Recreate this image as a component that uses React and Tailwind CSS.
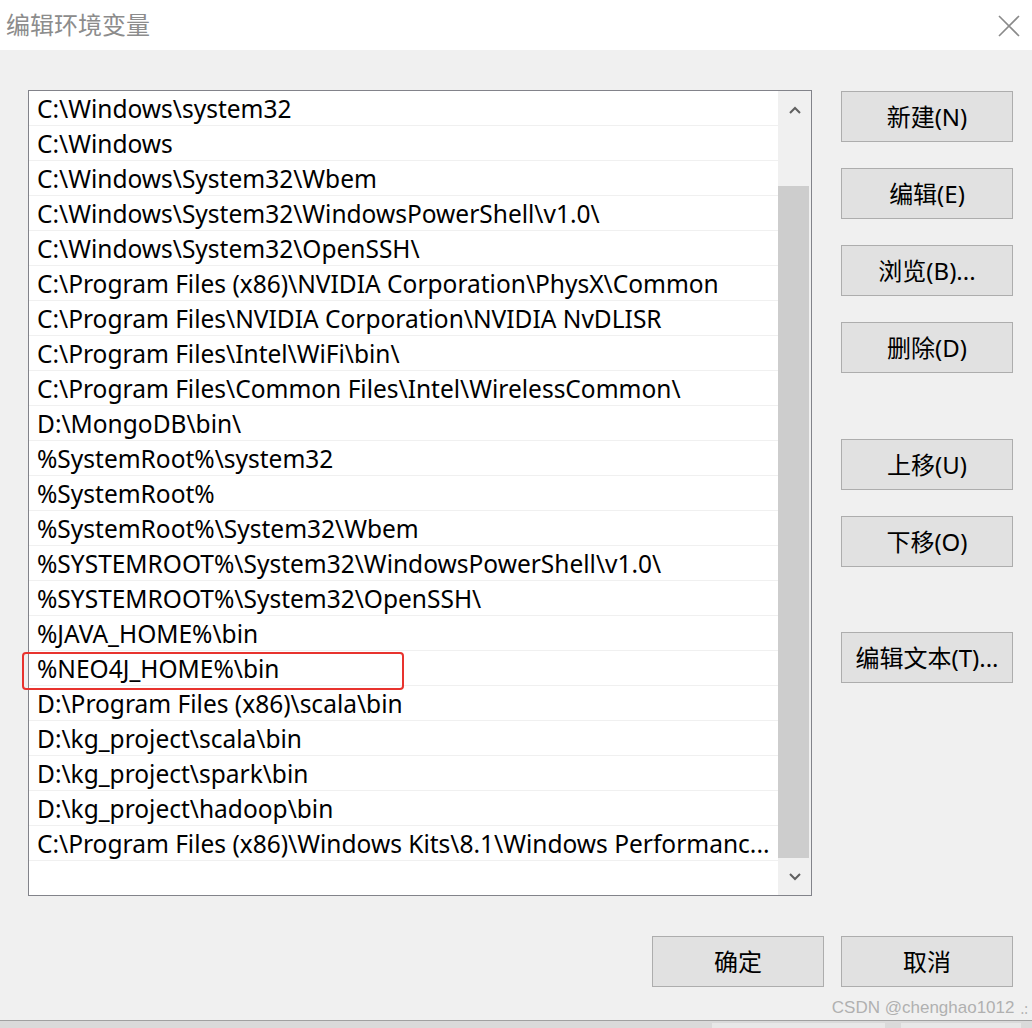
import React from "react";

const paths = [
  "C:\\Windows\\system32",
  "C:\\Windows",
  "C:\\Windows\\System32\\Wbem",
  "C:\\Windows\\System32\\WindowsPowerShell\\v1.0\\",
  "C:\\Windows\\System32\\OpenSSH\\",
  "C:\\Program Files (x86)\\NVIDIA Corporation\\PhysX\\Common",
  "C:\\Program Files\\NVIDIA Corporation\\NVIDIA NvDLISR",
  "C:\\Program Files\\Intel\\WiFi\\bin\\",
  "C:\\Program Files\\Common Files\\Intel\\WirelessCommon\\",
  "D:\\MongoDB\\bin\\",
  "%SystemRoot%\\system32",
  "%SystemRoot%",
  "%SystemRoot%\\System32\\Wbem",
  "%SYSTEMROOT%\\System32\\WindowsPowerShell\\v1.0\\",
  "%SYSTEMROOT%\\System32\\OpenSSH\\",
  "%JAVA_HOME%\\bin",
  "%NEO4J_HOME%\\bin",
  "D:\\Program Files (x86)\\scala\\bin",
  "D:\\kg_project\\scala\\bin",
  "D:\\kg_project\\spark\\bin",
  "D:\\kg_project\\hadoop\\bin",
  "C:\\Program Files (x86)\\Windows Kits\\8.1\\Windows Performanc...",
];

const font = { fontFamily: '"Noto Sans", "Noto Sans CJK SC", sans-serif' };

const Btn = ({ children }) => (
  <button className="w-[172px] h-[51px] border border-[#adadad] bg-[#e1e1e1] text-[24px] text-black flex items-center justify-center">
    {children}
  </button>
);

export default function App() {
  return (
    <div className="w-[1032px] h-[1028px] flex flex-col bg-[#f0f0f0] overflow-hidden" style={font}>
      {/* title bar */}
      <div className="h-[50px] bg-white flex items-center justify-between pl-[6px] pr-[12px] shrink-0">
        <span className="text-[24px] text-[#8c8c8c]">编辑环境变量</span>
        <svg width="22" height="22" viewBox="0 0 22 22" className="mt-[1px]">
          <path d="M1 1 L21 21 M21 1 L1 21" stroke="#8a8a8a" strokeWidth="1.6" />
        </svg>
      </div>

      <div className="flex-1 flex flex-col">
        <div className="flex pt-[40px]">
          {/* list box */}
          <div className="relative ml-[28px] w-[784px] h-[806px] border border-[#82838a] bg-white flex">
            <div className="flex-1 flex flex-col">
              {paths.map((p, i) => (
                <div
                  key={i}
                  className="h-[35px] shrink-0 border-b border-[#f0f0f0] flex items-center pl-[8px] pt-[2px] text-[24.5px] leading-[30px] text-black whitespace-nowrap"
                >
                  {p}
                </div>
              ))}
            </div>
            {/* highlight around NEO4J row */}
            <div className="absolute left-[-7px] top-[561px] w-[382px] h-[38px] border-2 border-[#e8332e] rounded-[4px]" />
            {/* scrollbar */}
            <div className="w-[33px] bg-[#f0f0f0] flex flex-col items-center">
              <div className="h-[38px] w-full flex items-center justify-center">
                <svg width="12" height="8" viewBox="0 0 12 8">
                  <path d="M1 7 L6 2 L11 7" fill="none" stroke="#606060" strokeWidth="2" />
                </svg>
              </div>
              <div className="h-[57px]" />
              <div className="w-[31px] h-[672px] bg-[#cdcdcd] self-start" />
              <div className="flex-1 w-full flex items-center justify-center">
                <svg width="12" height="8" viewBox="0 0 12 8">
                  <path d="M1 1 L6 6 L11 1" fill="none" stroke="#606060" strokeWidth="2" />
                </svg>
              </div>
            </div>
          </div>

          {/* side buttons */}
          <div className="ml-[29px] mt-[1px] flex flex-col">
            <Btn>新建(N)</Btn>
            <div className="h-[26px]" />
            <Btn>编辑(E)</Btn>
            <div className="h-[26px]" />
            <Btn>浏览(B)...</Btn>
            <div className="h-[26px]" />
            <Btn>删除(D)</Btn>
            <div className="h-[66px]" />
            <Btn>上移(U)</Btn>
            <div className="h-[26px]" />
            <Btn>下移(O)</Btn>
            <div className="h-[65px]" />
            <Btn>编辑文本(T)...</Btn>
          </div>
        </div>

        {/* bottom buttons */}
        <div className="flex justify-end gap-[17px] pr-[19px] mt-[40px]">
          <Btn>确定</Btn>
          <Btn>取消</Btn>
        </div>

        <div className="flex justify-end pr-[4px] mt-[10px] h-[22px] items-center">
          <span className="text-[17px] text-[#b0b0b0]" style={{ fontFamily: '"Liberation Sans", sans-serif' }}>
            CSDN @chenghao1012
          </span>
          <span className="ml-[6px] text-[14px] text-[#b0b0b0]">.:</span>
        </div>
      </div>

      {/* bottom edge */}
      <div className="h-[1px] bg-[#a0a0a0] shrink-0" />
      <div className="h-[7px] bg-[#dadada] shrink-0 flex">
        <div className="ml-[712px] mt-[2px] w-[173px] h-[5px] bg-[#e8e8e8]" />
        <div className="ml-[16px] mt-[2px] w-[120px] h-[5px] bg-[#e8e8e8]" />
      </div>
    </div>
  );
}
